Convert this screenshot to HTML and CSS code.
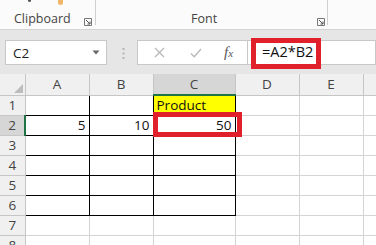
FILE: index.html
```html
<!DOCTYPE html>
<html lang="en">
<head>
    <meta charset="UTF-8">
    <title>Excel formula</title>
    <link rel="stylesheet" href="styles.css">
</head>
<body>

<div class="ribbon">
    <div class="group clipboard">
        <span class="bit dark"></span>
        <span class="bit orange"></span>
        <span class="label">Clipboard</span>
        <svg class="launcher" width="8" height="8" viewBox="0 0 8 8">
            <path d="M0.5 7.5V0.5H7.5V7.5Z" fill="none" stroke="#777" stroke-width="1"/>
            <path d="M2 2L6 6M6 3.5V6H3.5" fill="none" stroke="#555" stroke-width="1"/>
        </svg>
    </div>
    <div class="group font">
        <span class="label">Font</span>
        <svg class="launcher" width="8" height="8" viewBox="0 0 8 8">
            <path d="M0.5 7.5V0.5H7.5V7.5Z" fill="none" stroke="#777" stroke-width="1"/>
            <path d="M2 2L6 6M6 3.5V6H3.5" fill="none" stroke="#555" stroke-width="1"/>
        </svg>
    </div>
</div>

<div class="fbar">
    <div class="namebox">
        <span>C2</span>
        <svg width="8" height="5" viewBox="0 0 8 5"><path d="M0.5 0.5H7.5L4 4.5Z" fill="#666"/></svg>
    </div>
    <svg class="dots" width="3" height="11" viewBox="0 0 3 11">
        <rect x="0.5" y="0" width="2" height="2" fill="#b5b5b5"/>
        <rect x="0.5" y="4.5" width="2" height="2" fill="#b5b5b5"/>
        <rect x="0.5" y="9" width="2" height="2" fill="#b5b5b5"/>
    </svg>
    <div class="fbtns">
        <svg width="11" height="11" viewBox="0 0 11 11"><path d="M1 1L10 10M10 1L1 10" stroke="#b8b8b8" stroke-width="1.3"/></svg>
        <svg width="12" height="10" viewBox="0 0 12 10"><path d="M1 5.5L4.2 8.8L11 1" fill="none" stroke="#b8b8b8" stroke-width="1.3"/></svg>
        <span class="fx">f<small>x</small></span>
    </div>
    <div class="finput">
        <span class="formula">=A2*B2</span>
        <div class="mark formula-mark"></div>
    </div>
</div>

<div class="sheet">
    <table>
        <colgroup>
            <col class="c-head">
            <col class="c-std">
            <col class="c-std">
            <col class="c-wide">
            <col class="c-std">
            <col class="c-std">
            <col class="c-rest">
        </colgroup>
        <tr class="colheads">
            <th class="corner"><span class="tri"></span></th>
            <th>A</th><th>B</th><th class="sel">C</th><th>D</th><th>E</th><th></th>
        </tr>
        <tr>
            <th>1</th>
            <td class="b"></td><td class="b"></td><td class="b yellow">Product</td><td></td><td></td><td></td>
        </tr>
        <tr>
            <th class="sel">2</th>
            <td class="b num">5</td><td class="b num">10</td><td class="b num active">50</td><td></td><td></td><td></td>
        </tr>
        <tr>
            <th>3</th>
            <td class="b"></td><td class="b"></td><td class="b"></td><td></td><td></td><td></td>
        </tr>
        <tr>
            <th>4</th>
            <td class="b"></td><td class="b"></td><td class="b"></td><td></td><td></td><td></td>
        </tr>
        <tr>
            <th>5</th>
            <td class="b"></td><td class="b"></td><td class="b"></td><td></td><td></td><td></td>
        </tr>
        <tr>
            <th>6</th>
            <td class="b"></td><td class="b"></td><td class="b"></td><td></td><td></td><td></td>
        </tr>
        <tr>
            <th>7</th>
            <td></td><td></td><td></td><td></td><td></td><td></td>
        </tr>
        <tr>
            <th>8</th>
            <td></td><td></td><td></td><td></td><td></td><td></td>
        </tr>
    </table>
    <div class="mark cell-mark"></div>
</div>

</body>
</html>
```

FILE: styles.css
```css
body {
    margin: 0;
    width: 376px;
    height: 245px;
    overflow: hidden;
    background-color: #ffffff;
    font-family: "Open Sans", sans-serif;
}
.ribbon {
    display: flex;
    height: 29px;
    background-color: #fbfbfb;
    border-bottom: 1px solid #d4d4d4;
}
.group {
    position: relative;
    height: 25px;
    border-right: 1px solid #d0d0d0;
    color: #444;
    font-size: 12.5px;
}
.group .label {
    position: absolute;
    top: 10px;
}
.group .launcher {
    position: absolute;
    top: 18px;
}
.clipboard {
    width: 95px;
}
.clipboard .label {
    left: 14px;
}
.clipboard .launcher {
    left: 84px;
}
.bit {
    position: absolute;
    top: 0;
    border-radius: 0 0 3px 3px;
}
.bit.dark {
    left: 28px;
    width: 3px;
    height: 2px;
    background-color: #555;
}
.bit.orange {
    left: 58px;
    width: 5px;
    height: 5px;
    background-color: #f3b56a;
}
.font {
    width: 231px;
}
.font .label {
    left: 95px;
}
.font .launcher {
    left: 221px;
}
.fbar {
    display: flex;
    align-items: flex-start;
    height: 44px;
    padding-top: 10px;
    box-sizing: border-box;
    background-color: #e6e6e6;
}
.namebox {
    display: flex;
    align-items: center;
    justify-content: space-between;
    box-sizing: border-box;
    width: 102px;
    height: 25px;
    margin-left: 5px;
    padding: 0 6px 0 7px;
    background-color: #fff;
    border: 1px solid #c8c8c8;
    font-size: 13.5px;
    color: #222;
}
.dots {
    margin: 8px 0 0 116px;
    margin-left: 15px;
}
.fbtns {
    display: flex;
    align-items: center;
    box-sizing: border-box;
    width: 110px;
    height: 25px;
    margin-left: 12px;
    padding-left: 10px;
    gap: 0;
    background-color: #fff;
    border: 1px solid #c8c8c8;
    border-right: none;
}
.fbtns svg:first-child {
    margin-left: 6px;
}
.fbtns svg:nth-child(2) {
    margin-left: 25px;
}
.fx {
    margin-left: 22px;
    font-family: "Liberation Serif", serif;
    font-style: italic;
    font-size: 15px;
    color: #555;
}
.fx small {
    font-size: 11px;
}
.finput {
    position: relative;
    flex: 1;
    height: 25px;
    box-sizing: border-box;
    background-color: #fff;
    border: 1px solid #c8c8c8;
}
.formula {
    position: absolute;
    left: 14px;
    top: 1px;
    font-size: 14.5px;
    color: #111;
}
.mark {
    position: absolute;
    box-sizing: border-box;
    border: 5px solid #e0202b;
}
.formula-mark {
    left: 3px;
    top: -3px;
    width: 70px;
    height: 31px;
}
.sheet {
    position: relative;
}
table {
    border-collapse: collapse;
    table-layout: fixed;
    width: 390px;
}
.c-head { width: 25px; }
.c-std { width: 64px; }
.c-wide { width: 82px; }
.c-rest { width: 27px; }
th, td {
    height: 20px;
    padding: 0 3px;
    box-sizing: border-box;
    border: 1px solid #d4d4d4;
    font-size: 13.5px;
    line-height: 18px;
    white-space: nowrap;
    overflow: hidden;
}
th {
    background-color: #f0f0f0;
    color: #444;
    font-weight: normal;
    text-align: center;
    border-color: #c6c6c6;
}
.colheads th {
    height: 21px;
    border-top: none;
}
th.sel {
    background-color: #d6d6d6;
}
.colheads th.sel {
    border-bottom: 2px solid #217346;
}
tr th:first-child {
    border-left: none;
}
tr th.sel:first-child {
    border-right: 2px solid #217346;
}
.corner {
    position: relative;
}
.tri {
    position: absolute;
    right: 2px;
    bottom: 2px;
    width: 0;
    height: 0;
    border-left: 9px solid transparent;
    border-bottom: 9px solid #bdbdbd;
}
td {
    color: #111;
}
td.b {
    border: 1px solid #000;
}
td.num {
    text-align: right;
}
td.yellow {
    background-color: #ffff00;
}
.cell-mark {
    left: 153px;
    top: 38px;
    width: 89px;
    height: 25px;
}
```
